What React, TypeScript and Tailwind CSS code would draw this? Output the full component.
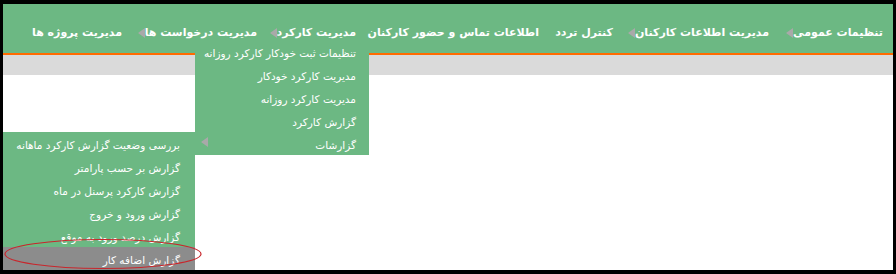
import * as React from 'react';

const navItems = [
  { label: 'تنظیمات عمومی', cls: 'w-[114px] pl-[9px]', arrow: true },
  { label: 'مدیریت اطلاعات کارکنان', cls: 'w-[156px] pl-[16px]', arrow: true },
  { label: 'کنترل تردد', cls: 'w-[74px]', arrow: false },
  { label: 'اطلاعات تماس و حضور کارکنان', cls: 'w-[183px]', arrow: false },
  { label: 'مدیریت کارکرد', cls: 'w-[99px] pl-[8px]', arrow: true },
  { label: 'مدیریت درخواست ها', cls: 'w-[135px] pl-[6px]', arrow: true },
  { label: 'مدیریت پروژه ها', cls: 'w-[100px]', arrow: false },
];

const workItems = [
  'تنظیمات ثبت خودکار کارکرد روزانه',
  'مدیریت کارکرد خودکار',
  'مدیریت کارکرد روزانه',
  'گزارش کارکرد',
];

const reportItems = [
  'بررسی وضعیت گزارش کارکرد ماهانه',
  'گزارش بر حسب پارامتر',
  'گزارش کارکرد پرسنل در ماه',
  'گزارش ورود و خروج',
  'گزارش درصد ورود به موقع',
];

const Arrow = () => (
  <span className="inline-block shrink-0 w-0 h-0 border-y-[5px] border-y-transparent border-r-[7px] border-r-[#a9a9a9]" />
);

export default function App() {
  return (
    <div
      className="w-[896px] h-[274px] bg-black pt-[4px] pb-[4px] px-[3px]"
      style={{ fontFamily: '"DejaVu Sans", Tahoma, sans-serif' }}
    >
      <div className="relative h-full bg-white overflow-hidden">
        <nav dir="rtl" className="h-[51px] bg-[#6cb883] border-b-2 border-[#ff6a00] flex items-start pt-[21px]">
          {navItems.map((it) => (
            <div key={it.label} className={`${it.cls} shrink-0 flex items-center justify-between pr-[10px] text-white text-[11px] font-bold whitespace-nowrap`}>
              <span>{it.label}</span>
              {it.arrow && <Arrow />}
            </div>
          ))}
        </nav>
        <div className="h-[20px] bg-[#dadada]" />

        {/* کارکرد submenu */}
        <ul dir="rtl" className="absolute top-[36px] left-[192px] w-[174px] bg-[#6cb883] text-white text-[10.5px]">
          {workItems.map((t) => (
            <li key={t} className="h-[23px] flex items-center pt-[5px] pr-[13px] whitespace-nowrap">{t}</li>
          ))}
          <li className="h-[23px] flex items-center justify-between pt-[5px] pr-[13px] pl-[6px] whitespace-nowrap">
            <span>گزارشات</span>
            <span className="-mt-[4px]"><Arrow /></span>
          </li>
        </ul>

        {/* گزارشات submenu */}
        <ul dir="rtl" className="absolute top-[128px] left-0 w-[192px] bg-[#6cb883] text-white text-[10.5px]">
          {reportItems.map((t) => (
            <li key={t} className="h-[23px] flex items-center pt-[4px] pr-[15px] whitespace-nowrap">{t}</li>
          ))}
          <li className="h-[23px] flex items-center pt-[4px] pr-[15px] bg-[#8c8c8c] whitespace-nowrap">گزارش اضافه کار</li>
        </ul>

        <svg className="absolute left-0 top-0 pointer-events-none" width="890" height="266">
          <ellipse cx="100" cy="250" rx="98" ry="14.5" fill="none" stroke="#c8262c" strokeWidth="1.2" />
        </svg>
      </div>
    </div>
  );
}
